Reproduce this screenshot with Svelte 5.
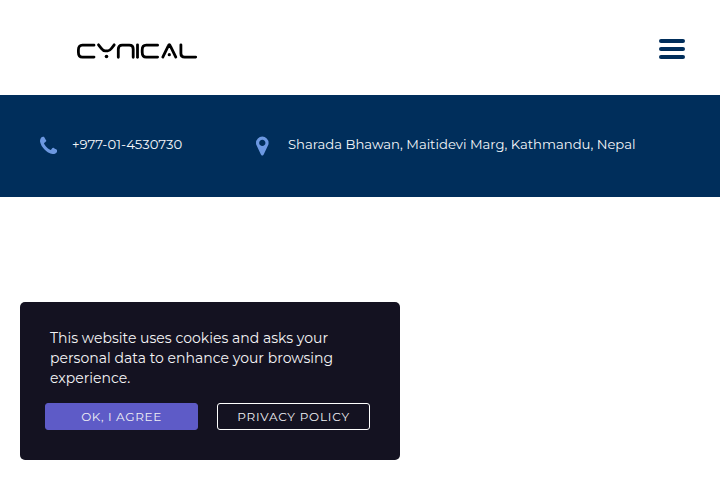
<script>
  const phone = '+977-01-4530730';
  const address = 'Sharada Bhawan, Maitidevi Marg, Kathmandu, Nepal';
  const message = ['This website uses cookies and asks your', 'personal data to enhance your browsing', 'experience.'];
</script>

<div class="page">
  <header>
    <svg class="logo" width="122" height="18" viewBox="0 0 122 18" role="img" aria-label="Cynical">
      <g fill="none" stroke="#000" stroke-width="2.8" stroke-linecap="round" stroke-linejoin="round">
        <path d="M18 3.2H6.4Q2.4 3.2 2.4 8V10.2Q2.4 15.1 6.4 15.1H18" />
        <path d="M22.5 2.8L25.3 6.3Q27.2 8.8 29.2 8.8H31.8Q33.8 8.8 35.6 6.3L38.2 2.8" />
        <path d="M42.3 15.3V7Q42.3 3.2 46.2 3.2H53.3Q57.2 3.2 57.2 7V15.3" />
        <path d="M61.5 2.8V15.3" />
        <path d="M81.6 3.2H70.2Q66.2 3.2 66.2 8V10.2Q66.2 15.1 70.2 15.1H81.6" />
        <path d="M86.8 15.1L92.3 3.8Q93.3 1.6 94.3 3.8L99.8 15.1" />
        <path d="M104.9 2.8V11.5Q104.9 15.1 108.7 15.1H119.7" />
      </g>
      <circle cx="30.5" cy="14.5" r="1.8" />
      <circle cx="93.3" cy="12.7" r="1.6" />
    </svg>
    <button class="menu" aria-label="Menu"><span></span><span></span><span></span></button>
  </header>

  <section class="contact">
    <div class="item phone">
      <svg width="17.3" height="22" viewBox="0 0 1408 1792"><path transform="translate(0 95)" d="M1408 1240q0 27-10 70.500t-21 68.500q-21 50-122 106-94 51-186 51-27 0-53-3.500t-57.500-12.500-47-14.500-55.500-20.500-49-18q-98-35-175-83-127-79-264-216t-216-264q-48-77-83-175-3-9-18-49t-20.500-55.500-14.500-47-12.500-57.500-3.500-53q0-92 51-186 56-101 106-122 25-11 68.500-21t70.500-10q14 0 21 3 18 6 53 76 11 19 30 54t35 63.500 31 53.500q3 4 17.500 25t21.500 35.500 7 28.500q0 20-28.500 50t-62 55-62 53-28.500 46q0 9 5 22.500t8.500 20.500 14 24 11.500 19q76 137 174 235t235 174q2 1 19 11.500t24 14 20.500 8.500 22.500 5q18 0 46-28.500t53-62 55-62 50-28.500q14 0 28.500 7t35.500 21.500 25 17.500q25 15 53.500 31t63.500 35 54 30q70 35 76 53 3 7 3 21z" /></svg>
      <span>{phone}</span>
    </div>
    <div class="item address">
      <svg width="12.6" height="22" viewBox="0 0 1024 1792"><path transform="translate(0 85)" d="M768 640q0-106-75-181t-181-75-181 75-75 181 75 181 181 75 181-75 75-181zm256 0q0 109-33 179l-364 774q-16 33-47.500 52t-67.500 19-67.500-19-46.500-52l-365-774q-33-70-33-179 0-212 150-362t362-150 362 150 150 362z" /></svg>
      <span>{address}</span>
    </div>
  </section>

  <aside class="cookie">
    <p>{#each message as line}<span class="line">{line}</span>{/each}</p>
    <div class="actions">
      <button class="agree">OK, I AGREE</button>
      <button class="policy">PRIVACY POLICY</button>
    </div>
  </aside>
</div>

<style>
  .page {
    position: relative;
    width: 720px;
    height: 480px;
    overflow: hidden;
    background: #fff;
    font-family: Montserrat, Inter, "Open Sans", sans-serif;
  }
  header {
    display: flex;
    justify-content: space-between;
    box-sizing: border-box;
    height: 95px;
    padding: 39px 35px 0 76px;
  }
  .logo { display: block; margin-top: 3px; }
  button { margin: 0; padding: 0; font-family: inherit; cursor: pointer; }
  .menu {
    display: flex;
    flex-direction: column;
    gap: 4px;
    width: 26px;
    height: 20px;
    border: 0;
    background: none;
  }
  .menu span { display: block; width: 26px; height: 4px; border-radius: 2px; background: #002e5b; }
  .contact {
    display: flex;
    align-items: flex-start;
    box-sizing: border-box;
    height: 102px;
    padding: 38px 40px 0;
    background: #002e5b;
    color: #f4f6f9;
    font-size: 13.2px;
    line-height: 22px;
  }
  .item { display: flex; white-space: nowrap; }
  .item svg { flex: none; margin-top: 1px; fill: #6c98e1; }
  .phone { width: 216px; }
  .phone span { margin-left: 14.7px; }
  .address span { margin-left: 19.4px; }
  .cookie {
    position: absolute;
    left: 20px;
    bottom: 20px;
    box-sizing: border-box;
    width: 380px;
    height: 158px;
    padding: 26px 30px 0 25px;
    border-radius: 5px;
    background: #141221;
    color: #f4f4f6;
  }
  .contact, .cookie { will-change: opacity; }
  p { margin: 0 0 15px 5px; font-size: 14px; line-height: 20px; }
  .line { display: block; white-space: nowrap; letter-spacing: 0.02px; }
  .actions { display: flex; justify-content: space-between; }
  .actions button {
    box-sizing: border-box;
    width: 153px;
    height: 27px;
    border: 1px solid #fff;
    border-radius: 3px;
    background: none;
    color: #f0f0f4;
    font-size: 12px;
    line-height: 25px;
    letter-spacing: 0.8px;
  }
  .actions .agree { border-color: #5e5bc7; background: #5e5bc7; letter-spacing: 0.65px; }
</style>
